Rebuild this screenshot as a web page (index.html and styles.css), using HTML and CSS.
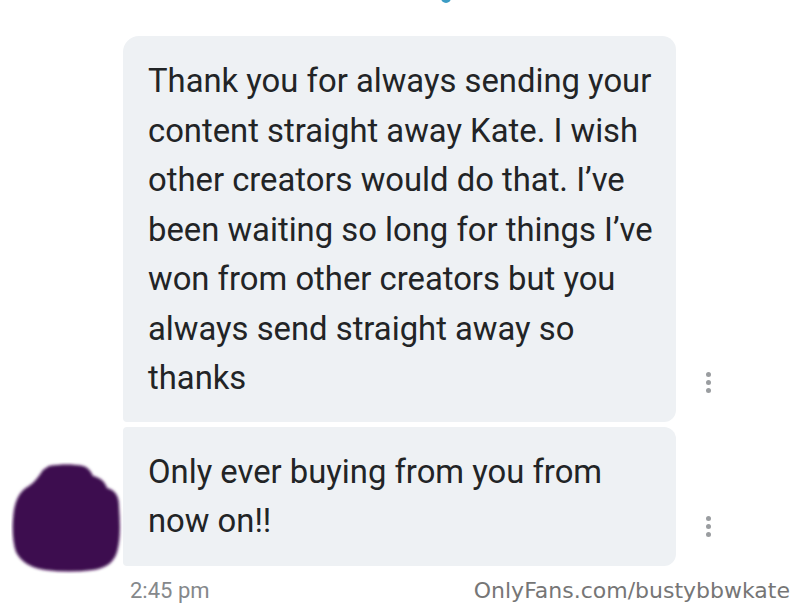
FILE: index.html
```html
<!DOCTYPE html>
<html>
<head>
<meta charset="utf-8">
<link rel="stylesheet" href="styles.css">
</head>
<body>
<div class="page">
  <span class="top-dot"></span>
  <div class="thread">
    <div class="avatar-cell"></div>
    <div class="bubble bubble-first">Thank you for always sending your content straight away Kate. I wish other creators would do that. I’ve been waiting so long for things I’ve won from other creators but you always send straight away so thanks</div>
    <div class="menu-cell"><span class="kebab"><i></i><i></i><i></i></span></div>

    <div class="avatar-cell">
      <svg class="avatar" width="112" height="112" viewBox="0 0 112 112">
        <defs>
          <filter id="soft" x="-10%" y="-10%" width="120%" height="120%">
            <feGaussianBlur stdDeviation="1.6"/>
          </filter>
        </defs>
        <path filter="url(#soft)" fill="#3c0a50" d="M38 4 C50 2 62 2 72 4 C78 6 80 10 82 14 C90 16 94 20 96 26 C104 28 108 34 108 44 C109 60 110 76 106 90 C102 102 94 106 82 108 C66 110 50 110 34 108 C20 106 10 100 5 90 C1 78 1 62 3 48 C5 36 10 28 18 24 C24 20 28 14 32 8 Z"/>
      </svg>
    </div>
    <div class="bubble bubble-last">Only ever buying from you from now on!!</div>
    <div class="menu-cell"><span class="kebab"><i></i><i></i><i></i></span></div>
  </div>
  <div class="footer">
    <span class="time">2:45 pm</span>
    <span class="watermark">OnlyFans.com/bustybbwkate</span>
  </div>
</div>
</body>
</html>
```
FILE: styles.css
```css
html, body {
  margin: 0;
  padding: 0;
  background: #ffffff;
}
.page {
  position: relative;
  width: 800px;
  height: 613px;
  overflow: hidden;
  padding-top: 36px;
  box-sizing: border-box;
  font-family: Roboto, "Noto Sans", sans-serif;
}
.top-dot {
  position: absolute;
  left: 441px;
  top: -7px;
  width: 10px;
  height: 10px;
  border-radius: 50%;
  background: #3b9cc4;
}
.thread {
  display: grid;
  grid-template-columns: 123px 553px 1fr;
  row-gap: 5px;
}
.bubble {
  background: #eef1f4;
  color: #222426;
  font-size: 32.8px;
  line-height: 49.5px;
  padding: 21px 20px 18px 25px;
}
.bubble-first {
  border-radius: 16px 14px 12px 4px;
}
.bubble-last {
  border-radius: 4px 12px 12px 4px;
  padding-bottom: 19px;
}
.avatar-cell {
  display: flex;
  align-items: flex-end;
}
.avatar {
  display: block;
  margin-left: 11px;
  margin-bottom: -8px;
}
.menu-cell {
  display: flex;
  align-items: flex-end;
  padding-left: 30px;
  padding-bottom: 29px;
}
.kebab {
  display: flex;
  flex-direction: column;
  gap: 3px;
}
.kebab i {
  display: block;
  width: 5px;
  height: 5px;
  border-radius: 50%;
  background: #9a9da0;
}
.footer {
  display: flex;
  justify-content: space-between;
  align-items: baseline;
  padding: 12px 10px 0 130px;
}
.time {
  font-family: Roboto, sans-serif;
  font-size: 22px;
  color: #85888b;
}
.watermark {
  font-family: "DejaVu Sans", sans-serif;
  font-size: 22px;
  color: #767676;
}
```
